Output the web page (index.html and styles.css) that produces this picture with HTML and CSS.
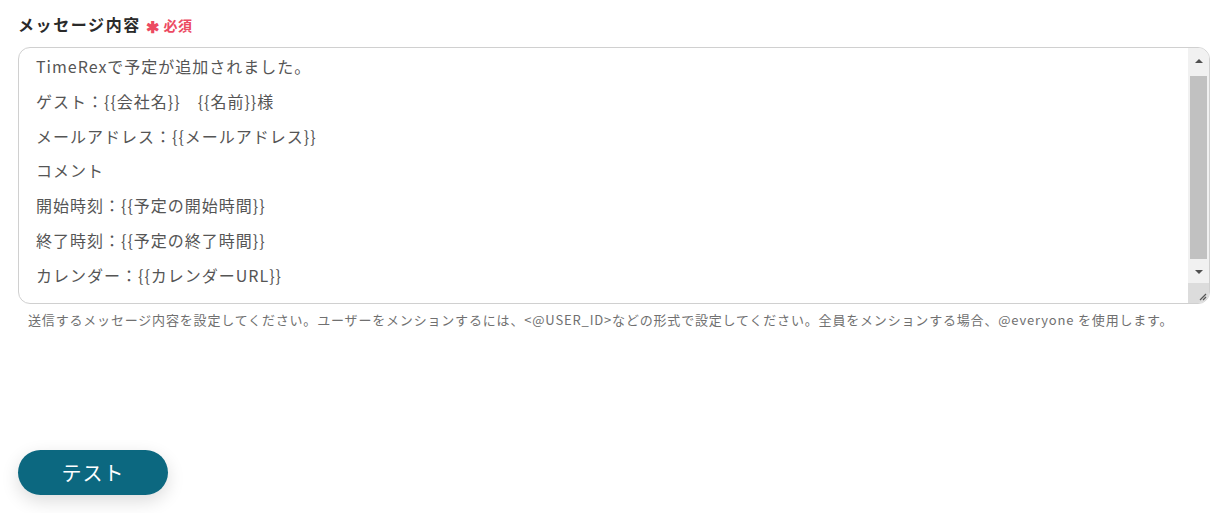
FILE: index.html
```html
<!DOCTYPE html>
<html lang="ja">
<head>
<meta charset="utf-8">
<link rel="stylesheet" href="styles.css">
</head>
<body>
<div class="page">
  <div class="field">
    <div class="label-row">
      <span class="label">メッセージ内容</span>
      <span class="req"><span class="star">✱</span>必須</span>
    </div>
    <div class="textarea">
      <div class="content">
        <p>TimeRexで予定が追加されました。</p>
        <p>ゲスト：{{会社名}}　{{名前}}様</p>
        <p>メールアドレス：{{メールアドレス}}</p>
        <p>コメント</p>
        <p>開始時刻：{{予定の開始時間}}</p>
        <p>終了時刻：{{予定の終了時間}}</p>
        <p>カレンダー：{{カレンダーURL}}</p>
      </div>
      <div class="scrollbar">
        <div class="arrow up"></div>
        <div class="track"><div class="thumb"></div></div>
        <div class="arrow down"></div>
        <div class="corner">
          <svg width="10" height="10" viewBox="0 0 10 10"><path d="M9 3 L3 9 M9 6 L6 9" stroke="#555" stroke-width="1.2" fill="none"/></svg>
        </div>
      </div>
    </div>
    <p class="help">送信するメッセージ内容を設定してください。ユーザーをメンションするには、&lt;@USER_ID&gt;などの形式で設定してください。全員をメンションする場合、@everyone を使用します。</p>
  </div>
  <div class="actions">
    <button class="btn">テスト</button>
  </div>
</div>
</body>
</html>
```
FILE: styles.css
```css
* { box-sizing: border-box; }
html, body { margin: 0; padding: 0; background: #fff; }
body {
  font-family: "Noto Sans CJK JP", "Noto Sans", sans-serif;
  color: #333;
}
.page {
  width: 1220px;
  height: 513px;
  padding: 12px 10px 0 18px;
  display: flex;
  flex-direction: column;
}
.label-row {
  display: flex;
  align-items: baseline;
  gap: 5px;
  height: 35px;
}
.label {
  font-size: 16px;
  font-weight: 700;
  color: #2a2a2a;
  line-height: 24px;
  letter-spacing: 1.6px;
}
.req {
  color: #ec4a62;
  font-size: 14px;
  font-weight: 700;
  display: flex;
  align-items: baseline;
  gap: 4px;
  letter-spacing: 0.5px;
}
.star { font-size: 16px; line-height: 14px; position: relative; top: 2px; }
.textarea {
  width: 1192px;
  height: 257px;
  border: 1px solid #d0d0d0;
  border-radius: 12px;
  display: flex;
  overflow: hidden;
}
.content {
  flex: 1;
  padding: 1px 0 0 17px;
}
.content p {
  margin: 0;
  font-size: 16px;
  line-height: 34.8px;
  color: #555;
  white-space: pre;
  letter-spacing: 1px;
}
.scrollbar {
  width: 21px;
  display: flex;
  flex-direction: column;
  background: #f1f1f1;
}
.arrow {
  height: 26px;
  display: flex;
  align-items: center;
  justify-content: center;
}
.arrow.up::before, .arrow.down::before {
  content: "";
  width: 0; height: 0;
  border-left: 4px solid transparent;
  border-right: 4px solid transparent;
}
.arrow.up::before { border-bottom: 4px solid #505050; }
.arrow.down::before { border-top: 4px solid #505050; }
.arrow.down { height: 22px; }
.track { flex: 1; padding: 2px 2px; display: flex; }
.thumb { flex: 1; background: #c1c1c1; }
.corner {
  height: 20px;
  background: #dcdcdc;
  display: flex;
  align-items: flex-end;
  justify-content: flex-end;
  padding: 0 2px 2px 0;
}
.help {
  margin: 7px 0 0 10px;
  font-size: 13px;
  color: #707070;
  line-height: 18px;
  letter-spacing: 0.82px;
  white-space: nowrap;
}
.actions {
  margin-top: 121px;
}
.btn {
  width: 150px;
  height: 45px;
  border: none;
  border-radius: 23px;
  background: #0c6880;
  color: #fff;
  font-family: "Noto Sans CJK JP", sans-serif;
  font-size: 20px;
  letter-spacing: 1px;
  box-shadow: 0 6px 18px rgba(0, 0, 0, 0.14);
}
```
